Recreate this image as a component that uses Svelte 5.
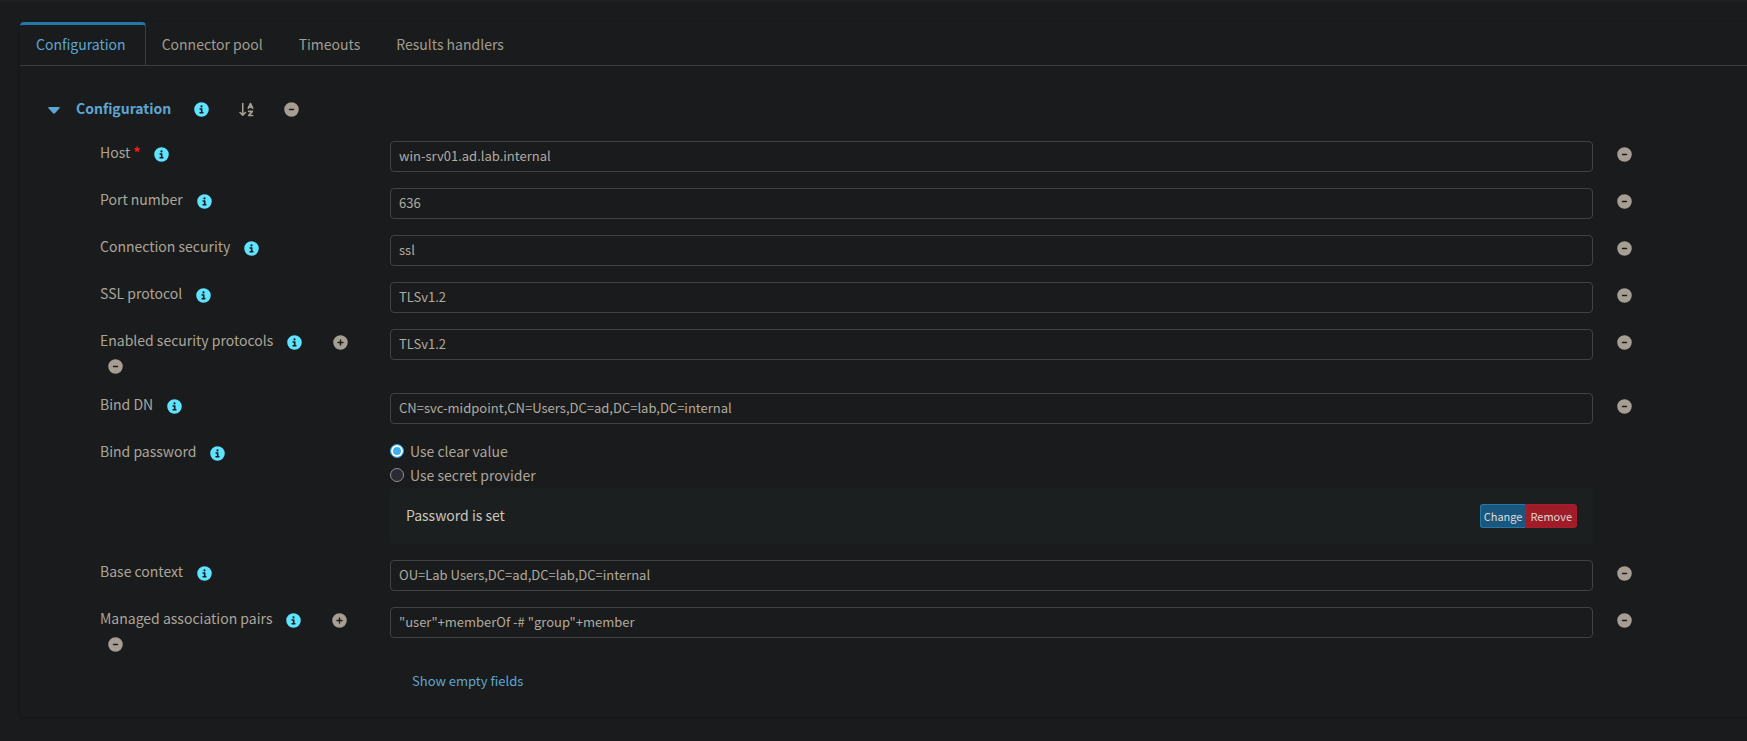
<script lang="ts">
  type Field = {
    id: string;
    label: string;
    value: string;
    required?: boolean;
    multiple?: boolean;
    password?: boolean;
  };

  const tabs = ['Configuration', 'Connector pool', 'Timeouts', 'Results handlers'];
  let active = $state('Configuration');
  let mode = $state('clear');

  let fields: Field[] = $state([
    { id: 'host', label: 'Host', value: 'win-srv01.ad.lab.internal', required: true },
    { id: 'port', label: 'Port number', value: '636' },
    { id: 'security', label: 'Connection security', value: 'ssl' },
    { id: 'ssl', label: 'SSL protocol', value: 'TLSv1.2' },
    { id: 'protocols', label: 'Enabled security protocols', value: 'TLSv1.2', multiple: true },
    { id: 'bind-dn', label: 'Bind DN', value: 'CN=svc-midpoint,CN=Users,DC=ad,DC=lab,DC=internal' },
    { id: 'bind-password', label: 'Bind password', value: '', password: true },
    { id: 'base', label: 'Base context', value: 'OU=Lab Users,DC=ad,DC=lab,DC=internal' },
    { id: 'pairs', label: 'Managed association pairs', value: '"user"+memberOf -# "group"+member', multiple: true }
  ]);

  const disc = 'M256 512A256 256 0 1 0 256 0a256 256 0 1 0 0 512z';
  const icons = {
    info: disc + 'M204 348h30V262H204c-13.3 0-24-10.700-24-24s10.700-24 24-24h64c13.300 0 24 10.700 24 24v110h16c13.300 0 24 10.700 24 24s-10.700 24-24 24H204c-13.300 0-24-10.700-24-24s10.700-24 24-24zm52-240a38 38 0 1 1 0 76 38 38 0 1 1 0-76z',
    minus: disc + 'M184 232H328c13.3 0 24 10.7 24 24s-10.7 24-24 24H184c-13.3 0-24-10.7-24-24s10.7-24 24-24z',
    plus: disc + 'M232 344V280H168c-13.3 0-24-10.7-24-24s10.7-24 24-24h64V168c0-13.3 10.7-24 24-24s24 10.7 24 24v64h64c13.3 0 24 10.7 24 24s-10.7 24-24 24H280v64c0 13.3-10.7 24-24 24s-24-10.7-24-24z'
  };
</script>

{#snippet iconButton(kind: 'info' | 'minus' | 'plus', name: string)}
  <button class="icon {kind}" type="button" aria-label={name}>
    <svg viewBox="-8 -8 528 528" aria-hidden="true"><path fill-rule="evenodd" d={icons[kind]} /></svg>
  </button>
{/snippet}

<main>
  <section class="card">
    <div class="tabs" role="tablist">
      {#each tabs as tab}
        <button
          type="button"
          role="tab"
          class="tab"
          class:active={tab === active}
          aria-selected={tab === active}
          onclick={() => (active = tab)}>{tab}</button>
      {/each}
    </div>

    <form class="panel">
      <header class="heading">
        <button class="toggle" type="button">
          <svg class="caret" viewBox="0 0 12 7" aria-hidden="true"><path d="M1 0H11Q12.200 .2 11.500 1.200L6.700 6.500Q6 7 5.300 6.500L.5 1.200Q-.2 .2 1 0Z" /></svg>
          <span>Configuration</span>
        </button>
        <div class="tools">
          {@render iconButton('info', 'Configuration help')}
          <button class="icon sort" type="button" aria-label="Sort properties">
            <svg viewBox="0 0 14 14" fill="none" stroke="currentColor" aria-hidden="true">
              <path d="M3.500 1.500V12.200M1 9.800L3.500 12.300L6 9.800" stroke-width="1.500" stroke-linecap="round" stroke-linejoin="round" />
              <path d="M8.700 5.800L10.700 1.500L12.700 5.800M9.400 4.700H12M9 8.700H12.500L9 12.600H12.700" stroke-width="1.600" stroke-linecap="round" stroke-linejoin="round" />
            </svg>
          </button>
          {@render iconButton('minus', 'Remove configuration')}
        </div>
      </header>

      {#each fields as field}
        <div class="row">
          <div class="name">
            <label for={field.id}>{field.label}{#if field.required}<span class="required">*</span>{/if}</label>
            {@render iconButton('info', `${field.label} help`)}
            {#if field.multiple}
              {@render iconButton('plus', `Add ${field.label}`)}
              {@render iconButton('minus', `Remove all ${field.label}`)}
            {/if}
          </div>
          {#if field.password}
            <div class="secret">
              <label class="choice">
                <input id={field.id} type="radio" name="mode" value="clear" bind:group={mode} />
                Use clear value
              </label>
              <label class="choice">
                <input type="radio" name="mode" value="provider" bind:group={mode} />
                Use secret provider
              </label>
              <div class="status">
                <span>Password is set</span>
                <div class="group">
                  <button type="button" class="small change">Change</button>
                  <button type="button" class="small remove">Remove</button>
                </div>
              </div>
            </div>
          {:else}
            <input class="text" id={field.id} type="text" bind:value={field.value} />
            <div class="side">{@render iconButton('minus', `Remove ${field.label}`)}</div>
          {/if}
        </div>
      {/each}

      <a class="more" href="#empty">Show empty fields</a>
    </form>
  </section>
</main>

<style>
  :global(body) {
    margin: 0;
    background: #191b1c;
  }

  main {
    box-sizing: border-box;
    min-height: 100vh;
    padding: 20px 0 24px 20px;
    border-top: 2px solid #1e2022;
    background: #191b1c;
    color: #aca59a;
    font-family: 'Noto Sans CJK SC', 'Noto Sans', sans-serif;
    font-size: 14px;
    line-height: 24px;
  }

  button,
  input {
    font: inherit;
    color: inherit;
    margin: 0;
  }

  button {
    padding: 0;
    border: 0;
    background: none;
    cursor: pointer;
  }

  .card {
    border-radius: 4px 0 0 4px;
    box-shadow: 0 0 1px rgba(0, 0, 0, 0.3), 0 1px 3px rgba(0, 0, 0, 0.2);
  }

  .tabs {
    display: flex;
    border-bottom: 1px solid #3a3e41;
  }

  .tab {
    padding: 7px 19px 9px 16px;
    border-top: 3px solid transparent;
    border-right: 1px solid transparent;
    border-radius: 4px 4px 0 0;
    color: #a39b8f;
  }

  .tab.active {
    border-top-color: #2477a8;
    border-right-color: #3a3e41;
    color: #5ea6d4;
  }

  .panel {
    padding: 30px 0 26px 28px;
  }

  .heading {
    display: flex;
    align-items: center;
    margin-bottom: 21px;
  }

  .toggle {
    display: flex;
    align-items: center;
    gap: 16px;
    color: #5ea6d4;
    font-weight: 700;
  }

  .caret {
    width: 12px;
    height: 7px;
    margin-top: 4px;
    fill: currentColor;
  }

  .tools {
    display: flex;
    gap: 30px;
    margin-left: 23px;
  }

  .icon {
    display: flex;
    align-items: center;
    height: 24px;
    padding-top: 3px;
    box-sizing: border-box;
    color: #a69e92;
  }

  .icon svg {
    display: block;
    width: 15px;
    height: 15px;
  }

  .icon path {
    fill: currentColor;
  }

  .icon.sort path {
    fill: none;
  }

  .icon.info {
    color: #5fe3ff;
  }

  .row {
    display: grid;
    grid-template-columns: 290px minmax(0, 1fr) 154px;
    align-items: start;
    margin: 0 0 16px 52px;
  }

  .name {
    display: flex;
    flex-wrap: wrap;
    align-items: flex-start;
    padding-right: 16px;
  }

  .name label {
    line-height: 22px;
  }

  .name .info {
    margin-left: 14px;
  }

  .name .plus {
    margin: 0 20px 0 31px;
  }

  .name .minus {
    margin-left: 8px;
  }

  .required {
    margin-left: 3px;
    color: #ff1a1a;
    font-weight: 700;
  }

  .text {
    box-sizing: border-box;
    width: 100%;
    height: 31px;
    padding: 0 8px 2px;
    border: 1px solid #3e4346;
    border-radius: 4px;
    background: #191b1c;
    font-size: 13px;
    color: #b2aba0;
  }

  .side {
    padding-left: 24px;
  }

  .choice {
    display: flex;
    align-items: center;
    gap: 6px;
    padding-bottom: 2px;
    line-height: 22px;
  }

  .choice input {
    appearance: none;
    box-sizing: border-box;
    width: 14px;
    height: 14px;
    border: 1px solid #8f8f9d;
    border-radius: 50%;
    background: #2b2a33;
  }

  .choice input:checked {
    border: 1px solid #2f9fe6;
    background: #3daee9;
    box-shadow: inset 0 0 0 2px #ffffff;
  }

  .status {
    display: flex;
    align-items: flex-start;
    justify-content: space-between;
    padding: 16px;
    border-radius: 4px;
    background: #1b1f20;
    color: #cbc6be;
    line-height: 22px;
  }

  .group {
    display: flex;
  }

  .small {
    box-sizing: border-box;
    height: 24px;
    padding: 0 4px 1px;
    border: 1px solid;
    font-size: 11px;
    line-height: 20px;
    color: #dedad5;
  }

  .change {
    padding: 0 3px 1px;
    border-color: #2477a8;
    border-right-width: 0;
    border-radius: 3px 0 0 3px;
    background: #1a577f;
  }

  .remove {
    border-color: #a81d2b;
    border-radius: 0 3px 3px 0;
    background: #a01c29;
  }

  .more {
    display: block;
    width: fit-content;
    margin-left: 364px;
    font-size: 13px;
    line-height: 20px;
    color: #5ea6d4;
    text-decoration: none;
  }
</style>
